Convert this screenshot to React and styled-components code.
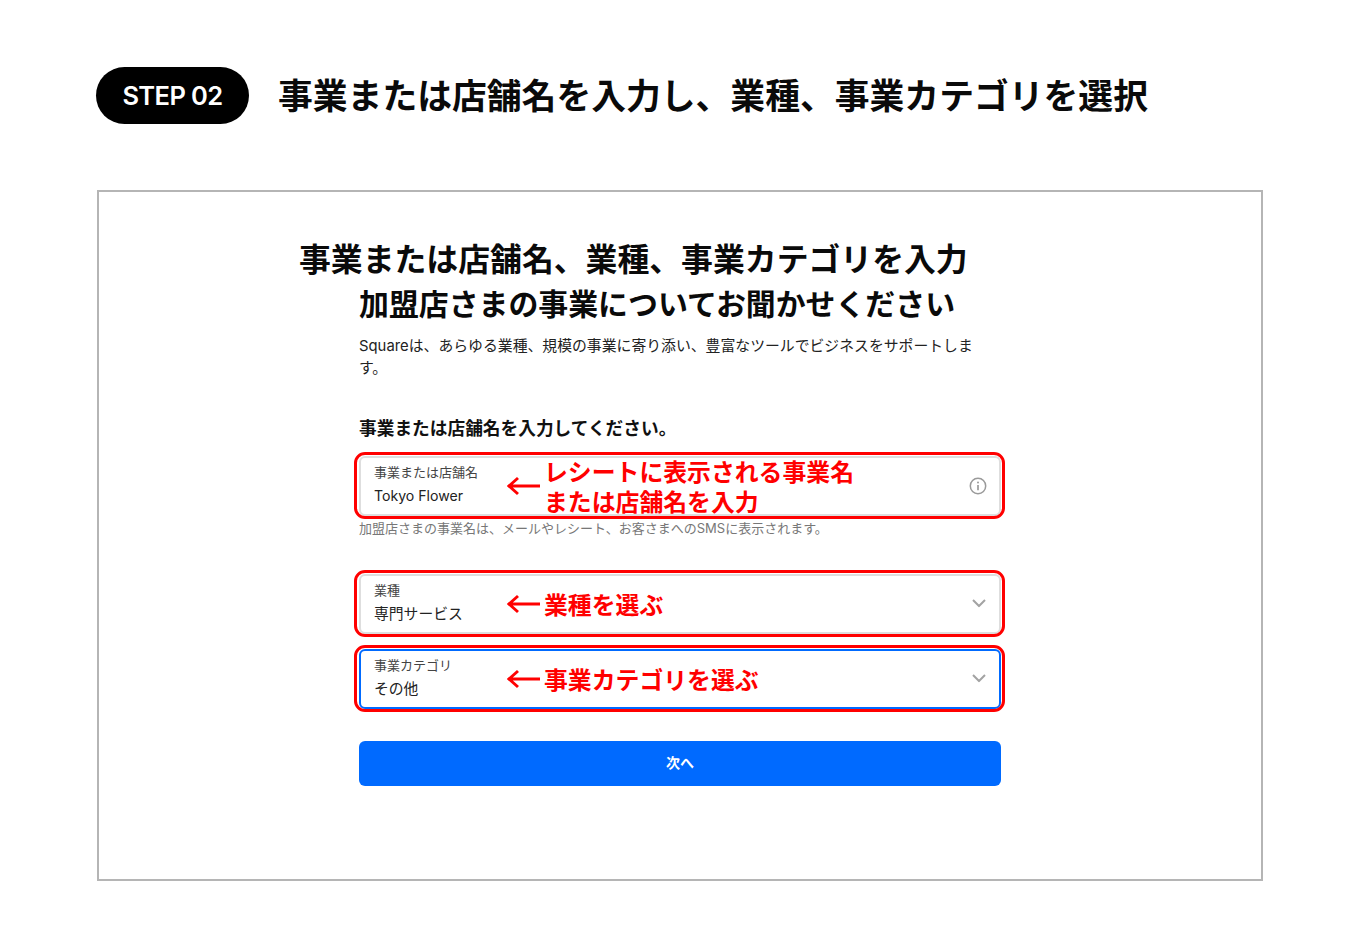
import React from 'react';
import styled, {createGlobalStyle} from 'styled-components';

const FONT = '"Inter", "Noto Sans CJK JP", sans-serif';

const GlobalStyle = createGlobalStyle`
  html, body {
    margin: 0;
    padding: 0;
    background: #fff;
    font-family: ${FONT};
    color: #111;
  }
`;

const Page = styled.div`
  width: 1360px;
  height: 930px;
  box-sizing: border-box;
  padding: 67px 0 0 96px;
  overflow: hidden;
`;

const StepHeader = styled.header`
  display: flex;
  align-items: center;
  gap: 29px;
  height: 57px;
`;

const StepPill = styled.div`
  width: 153px;
  height: 57px;
  border-radius: 29px;
  background: #000;
  color: #fff;
  display: flex;
  align-items: center;
  justify-content: center;
  font-size: 25.5px;
  font-weight: 600;
  letter-spacing: -0.6px;
`;

const StepTitle = styled.h1`
  margin: 0;
  padding-top: 2px;
  font-size: 34.8px;
  line-height: 57px;
  font-weight: 600;
  color: #0a0a0a;
  white-space: nowrap;
`;

const Card = styled.section`
  box-sizing: border-box;
  width: 1166px;
  height: 691px;
  margin: 66px 0 0 1px;
  padding: 46px 0 0 260px;
  border: 2px solid #b5b5b5;
`;

const Column = styled.div`
  width: 642px;
`;

const CardTitle = styled.h2`
  margin: 0 0 0 ${(p) => p.$outdent || 0}px;
  font-size: ${(p) => p.$size}px;
  line-height: 44px;
  font-weight: 600;
  color: #0a0a0a;
  white-space: nowrap;
`;

const Lead = styled.p`
  margin: 9px 0 0;
  width: 620px;
  font-size: 14.85px;
  line-height: 22px;
  color: #222;
`;

const SectionLabel = styled.h3`
  margin: 38px 0 0;
  font-size: 17.7px;
  line-height: 24px;
  font-weight: 600;
  color: #111;
`;

const Field = styled.div`
  position: relative;
  box-sizing: border-box;
  height: 60px;
  margin-top: ${(p) => p.$top}px;
  padding: 4px 13px 0;
  border-radius: 6px;
  border: ${(p) => (p.$active ? '2px solid #006aff' : '2px solid #dedede')};
  display: flex;
  flex-direction: column;
  background: #fff;

  /* red annotation ring drawn over the form */
  &::after {
    content: '';
    position: absolute;
    top: -6px;
    bottom: -5px;
    left: -7px;
    right: -6px;
    border: 3.5px solid #f00;
    border-radius: 11px;
    pointer-events: none;
  }
`;

const FieldLabel = styled.span`
  font-size: 13px;
  line-height: 20px;
  color: #444;
`;

const FieldValue = styled.span`
  font-size: ${(p) => p.$size || 14.8}px;
  line-height: 24px;
  margin-top: 2px;
  color: #222;
`;

const Hint = styled.p`
  margin: 3px 0 0;
  font-size: 13px;
  line-height: 18px;
  color: #777;
`;

const Note = styled.div`
  position: absolute;
  left: 146px;
  top: 0;
  bottom: 0;
  display: flex;
  align-items: center;
  gap: 3px;
  color: #f00;
`;

const NoteText = styled.div`
  padding-top: 4px;
  font-size: 23.85px;
  line-height: 30px;
  font-weight: 700;
  white-space: nowrap;
`;

const TrailingIcon = styled.svg`
  position: absolute;
  right: ${(p) => p.$right}px;
  top: 50%;
  margin-top: ${(p) => p.$nudge || 0}px;
  transform: translateY(-50%);
  display: block;
`;

const NextButton = styled.button`
  display: block;
  width: 100%;
  height: 45px;
  margin-top: 32px;
  padding: 0 0 3px;
  border: 0;
  border-radius: 6px;
  background: #006aff;
  color: #fff;
  font-family: ${FONT};
  font-size: 14px;
  font-weight: 600;
`;

const Arrow = () => (
  <svg width="34" height="20" viewBox="0 0 34 20" fill="none">
    <path d="M33 10H2M11 2L2 10l9 8" stroke="#f00" strokeWidth="3" />
  </svg>
);

const InfoIcon = () => (
  <TrailingIcon $right={12} width="18" height="18" viewBox="0 0 18 18" fill="none">
    <circle cx="9" cy="9" r="7.7" stroke="#9a9a9a" strokeWidth="1.5" />
    <circle cx="9" cy="5.4" r="1" fill="#9a9a9a" />
    <path d="M9 8v5.2" stroke="#9a9a9a" strokeWidth="1.7" />
  </TrailingIcon>
);

const Chevron = () => (
  <TrailingIcon $right={13} $nudge={-1} width="14" height="9" viewBox="0 0 14 9" fill="none">
    <path d="M1 1.5l6 6 6-6" stroke="#a3a3a3" strokeWidth="2" />
  </TrailingIcon>
);

const App = () => (
  <Page>
    <GlobalStyle />
    <StepHeader>
      <StepPill>STEP 02</StepPill>
      <StepTitle>事業または店舗名を入力し、業種、事業カテゴリを選択</StepTitle>
    </StepHeader>

    <Card>
      <Column>
        <CardTitle $size={31.85} $outdent={-60}>
          事業または店舗名、業種、事業カテゴリを入力
        </CardTitle>
        <CardTitle $size={29.9}>加盟店さまの事業についてお聞かせください</CardTitle>
        <Lead>
          Squareは、あらゆる業種、規模の事業に寄り添い、豊富なツールでビジネスをサポートします。
        </Lead>

        <SectionLabel>事業または店舗名を入力してください。</SectionLabel>

        <Field $top={15}>
          <FieldLabel>事業または店舗名</FieldLabel>
          <FieldValue $size={14.1}>Tokyo Flower</FieldValue>
          <Note>
            <Arrow />
            <NoteText>
              レシートに表示される事業名
              <br />
              または店舗名を入力
            </NoteText>
          </Note>
          <InfoIcon />
        </Field>
        <Hint>加盟店さまの事業名は、メールやレシート、お客さまへのSMSに表示されます。</Hint>

        <Field $top={37}>
          <FieldLabel>業種</FieldLabel>
          <FieldValue>専門サービス</FieldValue>
          <Note>
            <Arrow />
            <NoteText>業種を選ぶ</NoteText>
          </Note>
          <Chevron />
        </Field>

        <Field $top={15} $active>
          <FieldLabel>事業カテゴリ</FieldLabel>
          <FieldValue>その他</FieldValue>
          <Note>
            <Arrow />
            <NoteText>事業カテゴリを選ぶ</NoteText>
          </Note>
          <Chevron />
        </Field>

        <NextButton>次へ</NextButton>
      </Column>
    </Card>
  </Page>
);

export default App;
